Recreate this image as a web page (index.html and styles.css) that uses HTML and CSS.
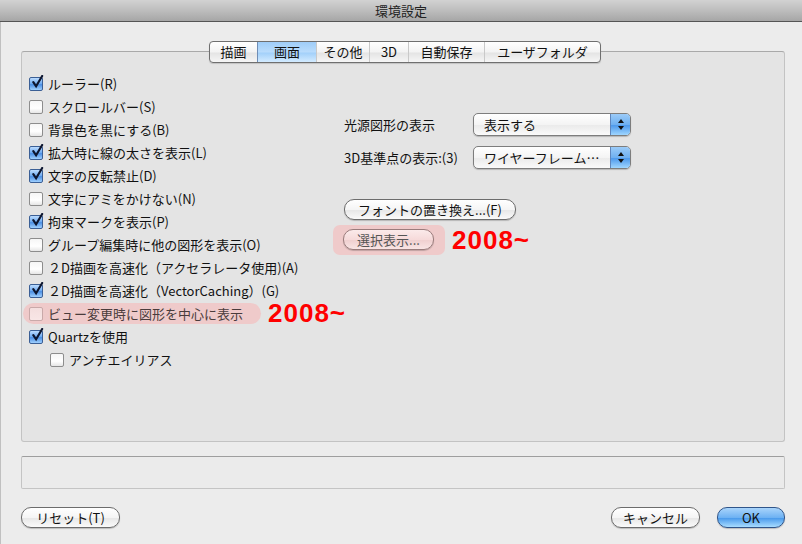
FILE: index.html
```html
<!doctype html>
<html>
<head>
<meta charset="utf-8">
<title>環境設定</title>
<link rel="stylesheet" href="styles.css">
</head>
<body>
<div class="titlebar">環境設定</div>
<div class="window">
  <div class="tabs">
    <span class="tab t1">描画</span>
    <span class="tab t2 active">画面</span>
    <span class="tab t3">その他</span>
    <span class="tab t4">3D</span>
    <span class="tab t5">自動保存</span>
    <span class="tab t6">ユーザフォルダ</span>
  </div>
  <div class="panel">
    <div class="left">
      <label class="row"><span class="box on"><svg viewBox="0 0 16 16"><path d="M3.5 7.5 L6.5 12 L13 1"/></svg></span>ルーラー(R)</label>
      <label class="row"><span class="box"></span>スクロールバー(S)</label>
      <label class="row"><span class="box"></span>背景色を黒にする(B)</label>
      <label class="row"><span class="box on"><svg viewBox="0 0 16 16"><path d="M3.5 7.5 L6.5 12 L13 1"/></svg></span>拡大時に線の太さを表示(L)</label>
      <label class="row"><span class="box on"><svg viewBox="0 0 16 16"><path d="M3.5 7.5 L6.5 12 L13 1"/></svg></span>文字の反転禁止(D)</label>
      <label class="row"><span class="box"></span>文字にアミをかけない(N)</label>
      <label class="row"><span class="box on"><svg viewBox="0 0 16 16"><path d="M3.5 7.5 L6.5 12 L13 1"/></svg></span>拘束マークを表示(P)</label>
      <label class="row"><span class="box"></span>グループ編集時に他の図形を表示(O)</label>
      <label class="row"><span class="box"></span>２D描画を高速化（アクセラレータ使用)(A)</label>
      <label class="row"><span class="box on"><svg viewBox="0 0 16 16"><path d="M3.5 7.5 L6.5 12 L13 1"/></svg></span>２D描画を高速化（VectorCaching）(G)</label>
      <div class="row-wrap">
        <label class="row mark"><span class="box"></span>ビュー変更時に図形を中心に表示</label>
        <span class="year">2008~</span>
      </div>
      <label class="row"><span class="box on"><svg viewBox="0 0 16 16"><path d="M3.5 7.5 L6.5 12 L13 1"/></svg></span>Quartzを使用</label>
      <label class="row sub"><span class="box"></span>アンチエイリアス</label>
    </div>
    <div class="right">
      <div class="field">
        <span class="field-label">光源図形の表示</span>
        <span class="popup"><span class="popup-text">表示する</span><span class="stepper"><i class="up"></i><i class="down"></i></span></span>
      </div>
      <div class="field">
        <span class="field-label">3D基準点の表示:(3)</span>
        <span class="popup"><span class="popup-text">ワイヤーフレーム…</span><span class="stepper"><i class="up"></i><i class="down"></i></span></span>
      </div>
      <div class="btn-line first">
        <span class="btn wide">フォントの置き換え...(F)</span>
      </div>
      <div class="btn-line">
        <span class="mark-box"><span class="btn pale">選択表示...</span></span>
        <span class="year">2008~</span>
      </div>
    </div>
  </div>
  <div class="status"></div>
  <div class="footer">
    <span class="btn push reset">リセット(T)</span>
    <span class="spacer"></span>
    <span class="btn push cancel">キャンセル</span>
    <span class="btn push ok">OK</span>
  </div>
</div>
</body>
</html>
```

FILE: styles.css
```css
html, body {
  margin: 0;
  padding: 0;
  width: 802px;
  height: 544px;
  overflow: hidden;
}
body {
  background: #ececec;
  color: #111;
  font-family: "Noto Sans CJK JP", "DejaVu Sans", sans-serif;
  font-size: 13px;
}
.titlebar {
  height: 21px;
  line-height: 21px;
  text-align: center;
  color: #222;
  font-size: 13px;
  background: linear-gradient(#d2d2d2, #bdbdbd 50%, #a6a6a6);
  border-bottom: 1px solid #555;
}
.window {
  border-left: 1px solid #c0c0c0;
  height: 522px;
  display: flex;
  flex-direction: column;
}

/* tabs */
.tabs {
  align-self: flex-start;
  margin: 19px 0 0 208px;
  display: flex;
  height: 20px;
  border: 1px solid #6f6f6f;
  border-radius: 4px;
  background: linear-gradient(#ffffff, #f3f3f3 50%, #e4e4e4 55%, #f6f6f6);
  box-shadow: 0 1px 1px rgba(0,0,0,0.15);
  position: relative;
  z-index: 1;
  overflow: hidden;
}
.tab {
  line-height: 20px;
  text-align: center;
  border-left: 1px solid #c9c9c9;
}
.tab:first-child { border-left: none; }
.tab.active {
  background: linear-gradient(#9fcdf8, #b9dcfc 50%, #a2d0fa 55%, #d3ebff);
  border-left-color: #6f8db5;
  border-right: 1px solid #6f8db5;
  margin-right: -1px;
}
.t1 { width: 47px; }
.t2 { width: 58px; }
.t3 { width: 52px; }
.t4 { width: 38px; }
.t5 { width: 75px; }
.t6 { width: 115px; }

.panel {
  margin: -12px 17px 0 20px;
  height: 376px;
  padding-top: 13px;
  background: #e4e4e4;
  border: 1px solid #c3c3c3;
  border-top-color: #a9a9a9;
  border-radius: 3px;
  display: flex;
}
.left {
  width: 313px;
  padding-left: 7px;
  padding-top: 7px;
}
.row {
  display: flex;
  align-items: center;
  height: 23px;
  line-height: 23px;
  gap: 5px;
  white-space: nowrap;
}
.row.sub { padding-left: 21px; }
.box {
  width: 12px;
  height: 12px;
  flex: none;
  border: 1px solid #8d8d8d;
  border-radius: 2px;
  background: linear-gradient(#f6f6f6, #ffffff 60%, #e6e6e6);
  position: relative;
}
.box.on {
  border-color: #3b5f95;
  background: linear-gradient(#bcdcff, #6aa8f0 50%, #4c8fe3 55%, #9fd0ff);
}
.box svg {
  position: absolute;
  left: 0;
  top: -3px;
  width: 15px;
  height: 15px;
  fill: none;
  stroke: #0d1630;
  stroke-width: 2.3;
  stroke-linecap: round;
}
.row-wrap {
  display: flex;
  align-items: center;
  height: 23px;
}
.row.mark {
  margin-left: -6px;
  padding: 0 18px 0 6px;
  height: 21px;
  border-radius: 11px;
  background: #efcaca;
  color: #4a3c3c;
}
.row.mark .box {
  border-color: #c9a9a9;
  background: linear-gradient(#f4dede, #f8e6e6);
}
.year {
  margin-left: 7px;
  color: #ff0000;
  font-family: "Liberation Sans", sans-serif;
  font-weight: bold;
  font-size: 26px;
  letter-spacing: 1px;
  line-height: 23px;
}

/* right column */
.right {
  padding-top: 48px;
  padding-left: 2px;
}
.field {
  display: flex;
  align-items: center;
  height: 23px;
  margin-bottom: 10px;
}
.field-label {
  width: 129px;
  white-space: nowrap;
}
.popup {
  display: flex;
  width: 156px;
  height: 21px;
  border: 1px solid #7d7d7d;
  border-radius: 5px;
  background: linear-gradient(#ffffff, #f4f4f4 50%, #ebebeb 55%, #fafafa);
  box-shadow: 0 1px 1px rgba(0,0,0,0.2);
  overflow: hidden;
}
.popup-text {
  flex: 1;
  padding-left: 10px;
  line-height: 21px;
  white-space: nowrap;
}
.stepper {
  width: 19px;
  border-left: 1px solid #5f86bd;
  background: linear-gradient(#9bcbf8, #6fb0f1 50%, #4f9aec 55%, #9fd6ff);
  display: flex;
  flex-direction: column;
  align-items: center;
  justify-content: center;
  gap: 3px;
}
.stepper i {
  width: 0;
  height: 0;
  border-left: 3px solid transparent;
  border-right: 3px solid transparent;
}
.stepper .up { border-bottom: 4px solid #111; }
.stepper .down { border-top: 4px solid #111; }

.btn-line {
  display: flex;
  align-items: center;
}
.btn-line.first { margin-top: 30px; margin-bottom: 5px; }
.btn {
  display: inline-block;
  height: 19px;
  line-height: 19px;
  padding: 0 12px;
  border: 1px solid #6c6c6c;
  border-radius: 10px;
  background: linear-gradient(#ffffff, #f5f5f5 50%, #e8e8e8 55%, #fafafa);
  box-shadow: 0 1px 1px rgba(0,0,0,0.2);
  white-space: nowrap;
}
.btn.wide { width: 170px; text-align: center; padding: 0; }
.mark-box {
  margin-left: -11px;
  padding: 4px 11px 5px 10px;
  border-radius: 7px;
  background: #efcaca;
}
.btn.pale {
  width: 89px;
  padding: 0;
  text-align: center;
  color: #555;
  border-color: #9a7c7c;
  background: linear-gradient(#fbeaea, #f6dada 50%, #f0d0d0 55%, #f9e4e4);
}
.btn-line .year { margin-left: 7px; }

.status {
  margin: 14px 17px 0 20px;
  height: 31px;
  background: #ebebeb;
  border: 1px solid #c4c4c4;
  border-top-color: #9e9e9e;
  border-radius: 2px;
}
.footer {
  display: flex;
  margin: 18px 17px 0 20px;
}
.spacer { flex: 1; }
.btn.push { text-align: center; padding: 0; }
.reset { width: 97px; }
.cancel { width: 87px; margin-right: 17px; }
.ok {
  width: 66px;
  border-color: #30558a;
  background: linear-gradient(#a9d4fb, #6eb2f3 50%, #4d9cec 55%, #a8dcff);
}
```
